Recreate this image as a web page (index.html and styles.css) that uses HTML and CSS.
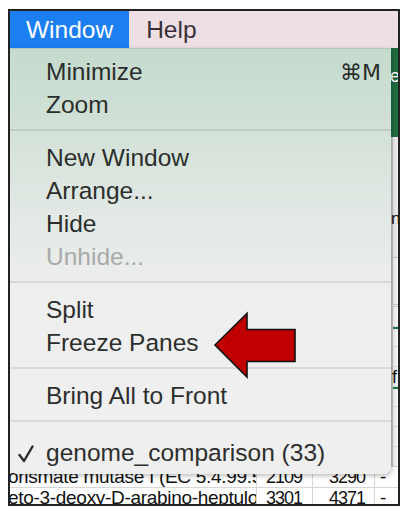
FILE: index.html
```html
<!DOCTYPE html>
<html>
<head>
<meta charset="utf-8">
<link rel="stylesheet" href="styles.css">
</head>
<body>
<div class="frame">
  <div class="menubar">
    <span class="mb-item active">Window</span>
    <span class="mb-item">Help</span>
  </div>
  <div class="sheet">
    <div class="ribbon"><span class="ribbon-tab">er</span></div>
    <div class="fx-area"><span class="fx-label">nt</span></div>
    <div class="col-hdr"></div>
    <div class="grid-rows">
      <div class="grow"></div>
      <div class="grow sel"></div>
      <div class="grow"></div>
      <div class="grow"><span class="fx-label small">f</span></div>
      <div class="grow sel"></div>
      <div class="grow"></div>
      <div class="grow"></div>
      <div class="grow"></div>
    </div>
    <div class="drow">
      <div class="c ca"><span class="ct">orismate mutase I (EC 5.4.99.5)</span></div>
      <div class="c cb">2109</div>
      <div class="c cc">3290</div>
      <div class="c cd">-</div>
    </div>
    <div class="drow">
      <div class="c ca"><span class="ct">eto-3-deoxy-D-arabino-heptulosonate</span></div>
      <div class="c cb">3301</div>
      <div class="c cc">4371</div>
      <div class="c cd">-</div>
    </div>
  </div>

  <div class="menu">
    <div class="group">
      <div class="item"><span>Minimize</span><span class="key">⌘M</span></div>
      <div class="item"><span>Zoom</span></div>
    </div>
    <div class="sep"></div>
    <div class="group">
      <div class="item"><span>New Window</span></div>
      <div class="item"><span>Arrange...</span></div>
      <div class="item"><span>Hide</span></div>
      <div class="item disabled"><span>Unhide...</span></div>
    </div>
    <div class="sep"></div>
    <div class="group">
      <div class="item"><span>Split</span></div>
      <div class="item"><span>Freeze Panes</span></div>
    </div>
    <div class="sep"></div>
    <div class="group">
      <div class="item"><span>Bring All to Front</span></div>
    </div>
    <div class="sep last"></div>
    <div class="group">
      <div class="item checked">
        <svg class="check" width="16" height="18" viewBox="0 0 16 18"><path d="M1.5 10 L6 16 L14.5 1.5" fill="none" stroke="#2c2e2d" stroke-width="2.4" stroke-linecap="round" stroke-linejoin="round"/></svg>
        <span>genome_comparison (33)</span>
      </div>
    </div>
  </div>

  <svg class="arrow" viewBox="10 11 388 493" width="388" height="493">
    <polygon points="215,345 247,313.5 247,329.5 295,329.5 295,361.5 247,361.5 247,377" fill="#c00000" stroke="#111" stroke-width="1.6" stroke-linejoin="miter"/>
  </svg>
</div>
</body>
</html>
```

FILE: styles.css
```css
html, body {
  margin: 0;
  padding: 0;
  background: #ffffff;
}

.frame {
  position: relative;
  margin: 9px 0 0 8px;
  width: 388px;
  height: 493px;
  border: 2px solid #222;
  overflow: hidden;
  background: #ffffff;
  font-family: "Liberation Sans", Arial, sans-serif;
}

/* menu bar */
.menubar {
  display: flex;
  height: 37px;
  background: #eddfe4;
  font-size: 24.5px;
  line-height: 37px;
}
.mb-item {
  padding: 0 16px 0 17px;
  color: #3a2f34;
}
.mb-item.active {
  background: #1b7ef1;
  color: #ffffff;
  padding: 0 16px 0 16px;
}

/* spreadsheet behind menu */
.sheet {
  display: flex;
  flex-direction: column;
}
.ribbon {
  height: 89px;
  background: #1f6c41;
  color: #ffffff;
  font-size: 18px;
  padding-left: 380px;
  padding-top: 18px;
  box-sizing: border-box;
}
.fx-area {
  height: 121px;
  background: #ebebeb;
  border-left: 2px solid #c6c6c6;
  margin-left: 381px;
  box-sizing: border-box;
  border-bottom: 1px solid #c4c4c4;
  padding-top: 72px;
}
.fx-label {
  font-size: 17px;
  color: #111;
  margin-left: -2px;
}
.fx-label.small {
  font-size: 18px;
  margin-left: -1px;
}
.col-hdr {
  height: 49px;
  background: #f1f1f1;
  margin-left: 381px;
  border-left: 2px solid #c6c6c6;
  border-bottom: 3px double #c8c8c8;
  box-sizing: border-box;
}
.grid-rows {
  margin-left: 381px;
  border-left: 2px solid #c6c6c6;
}
.grow {
  height: 20px;
  box-sizing: border-box;
  border-bottom: 1px solid #dadada;
  background: #f3f3f3;
  line-height: 20px;
}
.grow.sel {
  border-top: 2px solid #1f7a45;
}

.drow {
  display: flex;
  height: 20px;
  border-bottom: 1px solid #d6d6d6;
  font-size: 19px;
  line-height: 20px;
  color: #111;
  background: #fff;
}
.c {
  box-sizing: border-box;
  overflow: hidden;
  white-space: nowrap;
  border-right: 1px solid #d6d6d6;
}
.ca { width: 247px; }
.ct { display: block; margin-left: -2px; letter-spacing: -0.3px; }
.cb { width: 56px; text-align: right; padding-right: 10px; font-size: 18px; letter-spacing: -1px; }
.cc { width: 62px; text-align: right; padding-right: 9px; font-size: 18px; letter-spacing: -1px; }
.cd { flex: 1; padding-left: 5px; border-right: none; }

/* dropdown menu (overlay) */
.menu {
  position: absolute;
  left: 0;
  top: 37px;
  width: 381px;
  padding: 7px 0 5px;
  box-sizing: border-box;
  border-radius: 0 0 8px 8px;
  background: linear-gradient(to bottom, #c4dbcd 0px, #d3e1d8 85px, #e3e9e5 170px, #eeefee 250px, #f0eff0 100%);
  box-shadow: 0 1px 0 rgba(0,0,0,0.08) inset, 1px 2px 5px rgba(0,0,0,0.25);
  font-size: 24.5px;
  color: #2c2e2d;
}
.item {
  display: flex;
  justify-content: space-between;
  align-items: baseline;
  height: 33px;
  line-height: 33px;
  padding: 0 10px 0 36px;
  white-space: nowrap;
}
.item.disabled {
  color: #a9aaa9;
}
.item.checked {
  justify-content: flex-start;
  align-items: center;
  padding-left: 8px;
}
.check {
  flex: none;
  margin-right: 12px;
  margin-top: 2px;
}
.key {
  font-family: "DejaVu Sans", "Liberation Sans", sans-serif;
  font-size: 22px;
  letter-spacing: 0;
}
.sep {
  height: 2px;
  margin: 8px 0 10px;
  background: rgba(0, 0, 0, 0.085);
}
.sep.last {
  margin-bottom: 14px;
}

.arrow {
  position: absolute;
  left: 0;
  top: 0;
}
```
